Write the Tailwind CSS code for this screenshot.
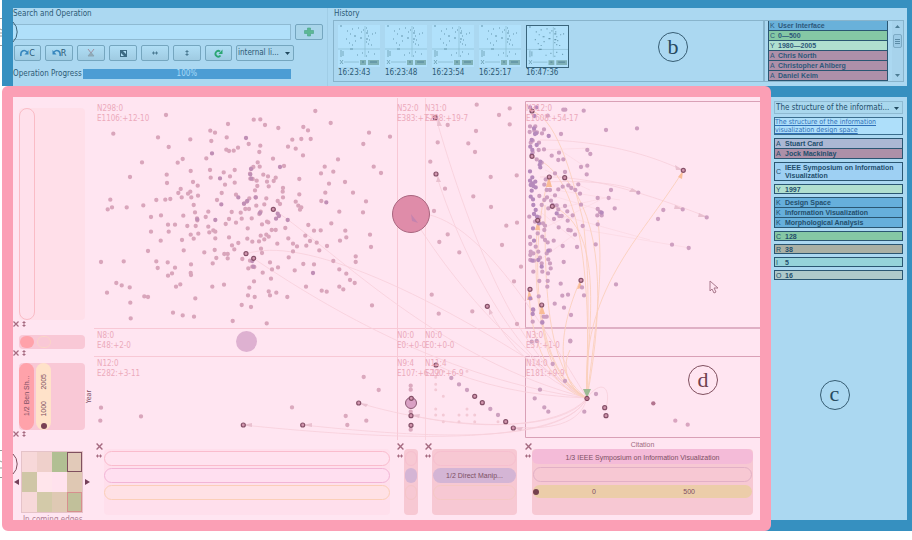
<!DOCTYPE html>
<html lang="en">
<head>
<meta charset="utf-8">
<meta name="viewport" content="width=device-width, initial-scale=1">
<title>Citation network explorer</title>
<script src="https://cdn.jsdelivr.net/npm/@tailwindcss/browser@4"></script>
</head>
<body class="relative overflow-hidden bg-white font-['DejaVu_Sans_Condensed','DejaVu_Sans',sans-serif] text-[8px] leading-[10px] text-[#2c5a75]">

<svg class="hidden">
  <symbol id="thumb" viewBox="0 0 42 42">
    <rect width="42" height="42" fill="#b1e1fb"/>
    <path d="M0 24H42M27 1V32" stroke="#8bbdd3" stroke-width=".7" fill="none"/>
    <path d="M2 1h2M9 6h1M14 4h1M20 3h1M12 9h1M8 14h1M16 11h2M11 18h1M17 16h1M14 20h1M23 7h1M22 13h2M25 5h1M28 3h1M29 6h1M28 8h2M30 11h1M28 14h2M31 15h1M28 17h1M30 19h1M34 9h1M37 8h1M33 20h1M12 24h3M24 28h1M30 27h1M19 30h1M36 29h1M28 31h1" stroke="#6698af" stroke-width="1.2"/>
    <path d="M3 25v7M5 26v5M2 35l3 4M5 35l-3 4" stroke="#77a9bd" stroke-width="1" fill="none"/>
    <path d="M6 37H21" stroke="#8fc0d6"/>
    <path d="M22 35h6v5h-6zM30 35h11v5H30z" fill="#80b1b7"/>
    <path d="M24 37h2M32 37h7" stroke="#4f8299"/>
  </symbol>
  <symbol id="cross" viewBox="0 0 6 6"><path d="M.5.5l5 5M5.500 .5l-5 5" stroke="#a56a80" stroke-width="1.2"/></symbol>
  <symbol id="updown" viewBox="0 0 6 6"><path d="M3 0l2 2H3.500V4H5L3 6 1 4h1.500V2H1z" fill="#a56a80"/></symbol>
  <symbol id="leftright" viewBox="0 0 6 4"><path d="M0 2L2 0V1.500H4V0L6 2 4 4V2.500H2V4z" fill="#a56a80"/></symbol>
</svg>

<header class="ml-[2px] flex h-[86px] border-t-8 border-r-[5px] border-l-[11px] border-[#3690c0] bg-[#abd8f1]">
  <section class="flex w-[315px] shrink-0 flex-col border-r border-[#a0cde6]">
    <h2 class="h-4 pt-px"><label for="q">Search and Operation</label></h2>
    <div class="flex h-4 gap-1 pr-1">
      <input id="q" type="text" class="h-4 min-w-0 flex-1 border border-l-0 border-[#8ebad2] bg-[#b0e0fa] pl-1">
      <button aria-label="Add" class="flex h-4 w-7 items-center justify-center rounded-xs border border-[#75a6bf] bg-[#a9d5ea]">
        <svg class="size-[10px]" viewBox="0 0 10 10"><path d="M3.500 1h3v2.500H9.500v3h-3V9h-3V6.500H.5v-3h3z" fill="#5cb894" stroke="#48a585" stroke-width=".6"/></svg>
      </button>
    </div>
    <div class="mt-[5px] flex h-4 gap-1 pl-px text-[9px]">
      <button class="flex w-[27px] items-center justify-center rounded-xs border border-[#75a6bf] bg-linear-to-b from-[#b0def5] to-[#9fcbe2]"><svg class="h-2 w-[9px]" viewBox="0 0 9 8"><path d="M1 7C0 2 4 0 7 3" fill="none" stroke="#3686bd" stroke-width="1.600"/><path d="M8.500 1v4.500H4.500z" fill="#3686bd"/></svg>C</button>
      <button class="flex w-[28px] items-center justify-center rounded-xs border border-[#75a6bf] bg-linear-to-b from-[#b0def5] to-[#9fcbe2]"><svg class="h-2 w-[9px]" viewBox="0 0 9 8"><path d="M8 7C9 2 5 0 2 3" fill="none" stroke="#3686bd" stroke-width="1.600"/><path d="M.5 1v4.500H4.500z" fill="#3686bd"/></svg>R</button>
      <button aria-label="Cut" class="flex w-[28px] items-center justify-center rounded-xs border border-[#75a6bf] bg-linear-to-b from-[#b0def5] to-[#9fcbe2]"><svg class="size-2" viewBox="0 0 8 8"><path d="M1 0l3 4 3-4" fill="none" stroke="#a08fa0"/><path d="M4 3.500L1 7h6z" fill="#92a9b5" stroke="#8aa6b5"/></svg></button>
      <button aria-label="Fit" class="flex w-[28px] items-center justify-center rounded-xs border border-[#75a6bf] bg-linear-to-b from-[#b0def5] to-[#9fcbe2]"><svg class="size-[7px]" viewBox="0 0 7 7"><path d="M0 0h7v7H0z" fill="#3c6a83"/><path d="M1 6h3L1 3zM3 1h3v3z" fill="#b0def5"/></svg></button>
      <button aria-label="Stretch horizontally" class="flex w-[28px] items-center justify-center rounded-xs border border-[#75a6bf] bg-linear-to-b from-[#b0def5] to-[#9fcbe2]"><svg class="h-1 w-[6px]" viewBox="0 0 6 4"><path d="M0 2L2 0V1.500H4V0L6 2 4 4V2.500H2V4z" fill="#4b7b93"/></svg></button>
      <button aria-label="Stretch vertically" class="flex w-[28px] items-center justify-center rounded-xs border border-[#75a6bf] bg-linear-to-b from-[#b0def5] to-[#9fcbe2]"><svg class="size-[6px]" viewBox="0 0 6 6"><path d="M3 0l2 2H3.500V4H5L3 6 1 4h1.500V2H1z" fill="#4b7b93"/></svg></button>
      <button aria-label="Refresh" class="flex w-[27px] items-center justify-center rounded-xs border border-[#75a6bf] bg-linear-to-b from-[#b0def5] to-[#9fcbe2]"><svg class="size-[9px]" viewBox="0 0 9 9"><path d="M6.500 6.500A2.800 2.800 0 1 1 6 2.500" fill="none" stroke="#2ba673" stroke-width="1.800"/><path d="M8.500.5V5H4.500z" fill="#2ba673"/></svg></button>
      <div class="relative w-[58px]">
        <select aria-label="Edge filter" class="h-4 w-full appearance-none rounded-xs border border-[#75a6bf] bg-[#a9d5ec] pl-px text-[8px]"><option>internal li...</option></select>
        <svg class="pointer-events-none absolute top-[7px] right-1 h-[3px] w-[5px]" viewBox="0 0 5 3"><path d="M0 0h5L2.500 3z" fill="#21495f"/></svg>
      </div>
    </div>
    <div class="mt-2 flex items-center gap-px">
      <label for="prog">Operation Progress</label>
      <div id="prog" role="progressbar" aria-valuenow="100" class="mr-9 flex-1 bg-[#4c9dd4] text-center text-[#a8dbf8]">100%</div>
    </div>
  </section>
  <section class="ml-[5px] flex min-w-0 flex-1 flex-col pr-[3px]">
    <h2 class="h-3 pt-px pl-px">History</h2>
    <div class="flex h-[62px]">
      <div class="flex min-w-0 flex-1 gap-[5px] border border-[#88b4cc] pt-1 pl-1">
        <figure class="w-[42px]"><svg class="size-[42px]"><use href="#thumb"/></svg><figcaption class="mt-px">16:23:43</figcaption></figure>
        <figure class="w-[42px]"><svg class="size-[42px]"><use href="#thumb"/></svg><figcaption class="mt-px">16:23:48</figcaption></figure>
        <figure class="w-[42px]"><svg class="size-[42px]"><use href="#thumb"/></svg><figcaption class="mt-px">16:23:54</figcaption></figure>
        <figure class="w-[42px]"><svg class="size-[42px]"><use href="#thumb"/></svg><figcaption class="mt-px">16:25:17</figcaption></figure>
        <figure class="w-[43px]"><svg class="size-[43px] border border-[#3a657c]"><use href="#thumb"/></svg><figcaption>16:47:36</figcaption></figure>
        <div class="flex flex-1 justify-center pl-[9px]"><span class="mt-[7px] flex size-[30px] items-center justify-center rounded-full border border-[#375d73] font-['Liberation_Serif',serif] text-[22px] leading-none text-[#274a60]">b</span></div>
      </div>
      <div class="flex w-[140px] border border-[#88b4cc] pl-[3px] font-['Liberation_Sans',sans-serif] text-[7px] leading-[9px]">
        <ul class="h-[60px] w-[120px] overflow-hidden border-x border-[#2a5672] font-bold text-[#2d587a]">
          <li class="flex h-[10px] gap-[3px] border-b border-[#2a5672] bg-[#69b1da] pl-px"><span class="w-[5px] font-normal">K</span>User Interface</li>
          <li class="flex h-[10px] gap-[3px] border-b border-[#2a5672] bg-[#85c8a5] pl-px"><span class="w-[5px] font-normal">C</span>0—500</li>
          <li class="flex h-[10px] gap-[3px] border-b border-[#2a5672] bg-[#b0dfcf] pl-px"><span class="w-[5px] font-normal">Y</span>1980—2005</li>
          <li class="flex h-[10px] gap-[3px] border-b border-[#2a5672] bg-[#ae90a9] pl-px"><span class="w-[5px] font-normal">A</span>Chris North</li>
          <li class="flex h-[10px] gap-[3px] border-b border-[#2a5672] bg-[#ae90a9] pl-px"><span class="w-[5px] font-normal">A</span>Christopher Ahlberg</li>
          <li class="flex h-[10px] gap-[3px] border-b border-[#2a5672] bg-[#ae90a9] pl-px"><span class="w-[5px] font-normal">A</span>Daniel Keim</li>
        </ul>
        <div class="ml-1 flex flex-1 flex-col items-center bg-[#a7d3ec] py-1">
          <svg class="h-[3px] w-[5px]" viewBox="0 0 5 3"><path d="M0 3h5L2.500 0z" fill="#4d7c94"/></svg>
          <div class="mt-[6px] flex h-[14px] w-[9px] flex-col items-center justify-center gap-px rounded-xs border border-[#7dabc5] bg-[#9dcbe6]"><i class="h-px w-[5px] bg-[#5b8ba6]"></i><i class="h-px w-[5px] bg-[#5b8ba6]"></i><i class="h-px w-[5px] bg-[#5b8ba6]"></i></div>
          <svg class="mt-auto h-[3px] w-[5px]" viewBox="0 0 5 3"><path d="M0 0h5L2.500 3z" fill="#4d7c94"/></svg>
        </div>
      </div>
    </div>
  </section>
</header>

<div class="ml-[2px] flex h-[445px]">
  <main class="relative z-10 grid min-w-0 flex-1 grid-cols-[81px_minmax(0,1fr)] grid-rows-[343px_80px] overflow-hidden rounded-md border-[11px] border-[#fb9fb5] bg-[#ffe5f1] text-[#7d4f63]">

    <div class="flex flex-col pt-[11px]">
      <div class="ml-[6px] flex h-[212px] w-[66px] rounded-sm bg-[#ffdfe9]"><div class="w-[16px] rounded-full border border-[#fabcc6] bg-[#ffe0eb]"></div></div>
      <div class="flex h-[15px] gap-[2px]"><svg class="mt-px size-[6px]"><use href="#cross"/></svg><svg class="mt-px size-[6px]"><use href="#updown"/></svg></div>
      <div class="ml-[6px] flex h-[14px] w-[66px] items-center gap-[3px] rounded-sm bg-[#f9c8d6]"><i class="ml-px h-3 w-[14px] rounded-full bg-[#ffa2aa]"></i><i class="h-3 w-[14px] rounded-full border border-[#fbd5c8]"></i></div>
      <div class="flex h-[14px] gap-[2px]"><svg class="mt-px size-[6px]"><use href="#cross"/></svg><svg class="mt-px size-[6px]"><use href="#updown"/></svg></div>
      <div class="flex items-center">
        <div class="ml-[6px] flex h-[67px] w-[66px] gap-[2px] rounded-sm bg-[#f9c8d6] font-['Liberation_Sans',sans-serif] text-[7px] leading-[15px]">
          <div class="h-full w-[15px] rounded-full bg-[#ffa2aa]"><span class="block h-full rotate-180 pt-[14px] [writing-mode:vertical-rl]">1/2 Ben Sh...</span></div>
          <div class="flex h-full w-[15px] flex-col items-center rounded-full bg-[#ffe2c9] pb-px"><span class="mt-[11px] rotate-180 [writing-mode:vertical-rl]">2005</span><span class="mt-[11px] rotate-180 [writing-mode:vertical-rl]">1000</span><i class="mt-auto size-[6px] rounded-full bg-[#7a4055]"></i></div>
        </div>
        <span class="rotate-180 text-[7px] leading-[9px] [writing-mode:vertical-rl]">Year</span>
      </div>
      <div class="flex gap-[2px]"><svg class="mt-px size-[6px]"><use href="#cross"/></svg><svg class="mt-px size-[6px]"><use href="#updown"/></svg></div>
    </div>

    <svg class="h-full w-full" viewBox="94 97 666 343" font-size="8" fill="none">
      <g stroke="#f8c8d5">
        <path d="M94 328.500H525M94 356.500H525M397.500 98V440"/><path d="M425.500 98V440" stroke="#fbd3dd"/>
        <path d="M760 101.500H525.500V328M760 356.500H525.500V437.500H760" stroke="#d9a0b6"/><path d="M525 328H760" stroke="#dfb0c5" stroke-width="2"/>
      </g>
      <g stroke="#f7cfda" stroke-width=".8">
        <path d="M273 209C340 255 440 360 587 398M246 254C300 235 430 290 587 398M253 258C330 310 450 380 587 398M411 214C470 310 540 370 587 398M417 213C480 215 545 330 587 398M436 118C480 270 530 370 587 398M436 174C470 280 530 375 587 398M487 306Q520 370 587 398M436 365Q500 395 587 398M510 427C550 430 580 425 587 398"/>
        <path d="M243 425C350 436 560 453 587 398M303 425C400 435 560 450 587 398M359 403C450 430 560 435 587 398M411 415C470 430 560 430 587 398M587 398C600 380 612 385 606 408M540 177C590 175 650 195 705 216M545 182C590 180 625 184 638 192M540 140C600 140 650 155 680 169"/>
      </g>
      <path d="M545 170L590 190M550 195L600 210M540 230L600 200M555 190L620 200M550 210L605 198M540 150L590 148M560 215L650 240M585 230L690 248M560 150L590 170M540 260L580 230M538 210L575 240" stroke="#fbd9e3" stroke-width=".8"/>
      <g stroke="#fad0bc" stroke-width=".9">
        <path d="M532 111C560 120 575 190 583 220C592 290 586 350 587 398M532 157C575 170 592 250 587 398M549 177C530 240 530 370 587 398M565 178C602 220 605 300 587 398M552 206C610 230 585 340 587 398M538 220C530 300 545 380 587 398M529 290C530 340 550 390 587 398M542 305C540 350 560 390 587 398M580 281C550 350 565 390 587 398M683 171C640 240 580 290 587 398M545 205C545 280 545 370 587 398M598 220C604 280 595 330 587 398M570 350C560 370 570 390 587 398"/>
      </g>
      <g fill="#f9bd97"><path d="M549 177l-3 10h6zM538 220l-3 10h5zM529 290l-2 10h6zM542 305l-3 9h6zM580 281l-3 8 5-1zM683 171l-5 6 4 2z"/></g>
      <g fill="#eac1d0"><path d="M638 192l-6-4-3 4zM683 170l-8-5 1 5zM683 209l-8-4-1 4zM707 217l-8-4-1 4zM243 425l9-2v4zM303 425l9-2v4zM359 403l9 1-2 3zM411 415l9-1-1 4zM514 428l9-1-2 4zM438 176l-2 6h5zM438 118l-1 8h5zM489 308l0 7 4-2z"/></g>
      <circle cx="411" cy="214" r="18.500" fill="#df8ca9" stroke="#a9657f"/><path d="M411 214l1 7 6 2z" fill="#c583ae"/>
      <circle cx="246.500" cy="341.500" r="10.500" fill="#deb1d1"/>
      <circle cx="411" cy="403" r="5.500" fill="#d9a0c4" stroke="#8b5873"/>
      <g id="dots" stroke-linecap="round"></g>
      <path d="M583 389h8l-4 9z" fill="#9dbb94"/><circle cx="587" cy="398.500" r="2.200" fill="#b9748c" stroke="#7c4259"/>
      <g fill="#ecaabb" class="font-['DejaVu_Sans_Condensed','DejaVu_Sans',sans-serif]">
        <text x="97" y="111">N298:0</text><text x="97" y="121">E1106:+12-10</text>
        <text x="397" y="111">N52:0</text><text x="397" y="121">E383:+7-8</text>
        <text x="425" y="111">N31:0</text><text x="425" y="121">E298:+19-7</text>
        <text x="526" y="111">N312:0</text><text x="526" y="121">E1608:+54-17</text>
        <text x="97" y="338">N8:0</text><text x="97" y="348">E48:+2-0</text>
        <text x="397" y="338">N0:0</text><text x="397" y="348">E0:+0-0</text>
        <text x="425" y="338">N0:0</text><text x="425" y="348">E0:+0-0</text>
        <text x="526" y="338">N3:0</text><text x="526" y="348">E37:+1-0</text>
        <text x="97" y="366">N12:0</text><text x="97" y="376">E282:+3-11</text>
        <text x="397" y="366">N9:4</text><text x="397" y="376">E107:+6-12</text>
        <text x="425" y="366">N11:4</text><text x="425" y="376">E290:+6-9</text>
        <text x="526" y="366">N14:0</text><text x="526" y="376">E181:+9-9</text>
      </g>
      <circle cx="703" cy="380" r="14.500" stroke="#80505f"/><text x="703" y="387" text-anchor="middle" font-size="22" fill="#70404f" class="font-['Liberation_Serif',serif]">d</text>
      <path d="M710 281v10l2-2 2 4 2-1-2-4h4z" fill="#ffe5f1" stroke="#a9788c"/>
    </svg>

    <div class="flex flex-col pt-[11px]">
      <div class="flex items-center gap-[2px] pl-px">
        <button aria-label="Previous"><svg class="block h-[6px] w-[5px]" viewBox="0 0 5 6"><path d="M5 0v6L0 3z" fill="#75405a"/></svg></button>
        <div class="grid h-[62px] w-[62px] grid-cols-4 grid-rows-3 border border-[#e5c3c9]">
          <i class="bg-[#f7d8d9]"></i><i class="bg-[#efd0cb]"></i><i class="bg-[#b1bf93]"></i><i class="border border-[#80505f] bg-[#e2cab9]"></i>
          <i class="bg-[#cfc6a6]"></i><i class="bg-[#ffe5eb]"></i><i class="bg-[#ffe2ed]"></i><i class="bg-[#dfc8b3]"></i>
          <i class="bg-[#f7d8d9]"></i><i class="bg-[#d3caa9]"></i><i class="bg-[#dfc9b4]"></i><i class="border border-[#d78f8e] bg-[#c1c09a]"></i>
        </div>
        <button aria-label="Next"><svg class="block h-[6px] w-[5px]" viewBox="0 0 5 6"><path d="M0 0v6L5 3z" fill="#75405a"/></svg></button>
      </div>
      <div class="mt-[2px] h-[5px] overflow-hidden pl-[10px] text-[#b07d92]">In coming edges</div>
    </div>

    <div class="grid grid-cols-[303fr_28fr_100fr_235fr] pt-[3px] font-['Liberation_Sans',sans-serif] text-[7px]">
      <div class="flex gap-px pr-[7px] pl-[2px]">
        <div class="flex w-[7px] flex-col gap-1"><svg class="size-[7px]"><use href="#cross"/></svg><svg class="h-1 w-[6px]"><use href="#leftright"/></svg></div>
        <div class="mt-[6px] flex h-[66px] flex-1 flex-col gap-[2px] rounded-sm bg-[#ffdfec] pt-[2px]"><i class="h-[15px] rounded-full border border-[#fabccd] bg-[#ffe2ef]"></i><i class="h-[15px] rounded-full border border-[#f2b5d6] bg-[#ffdff0]"></i><i class="h-[15px] rounded-full border border-[#fbcfb8] bg-[#ffe1e5]"></i></div>
      </div>
      <div class="flex">
        <div class="flex w-[7px] flex-col gap-1"><svg class="size-[7px]"><use href="#cross"/></svg><svg class="h-1 w-[6px]"><use href="#leftright"/></svg></div>
        <div class="mt-[6px] flex h-[66px] w-[14px] flex-col items-center gap-[2px] rounded-sm bg-[#f7c8d3] pt-[2px]"><i class="h-[15px] w-3 rounded-full border border-[#f6bfcf]"></i><i class="h-[15px] w-3 rounded-full bg-[#d4b5d5]"></i><i class="h-[15px] w-3 rounded-full border border-[#f5c5c8]"></i></div>
      </div>
      <div class="flex pr-2">
        <div class="flex w-[7px] flex-col gap-1"><svg class="size-[7px]"><use href="#cross"/></svg><svg class="h-1 w-[6px]"><use href="#leftright"/></svg></div>
        <div class="mt-[6px] flex h-[66px] flex-1 flex-col gap-[2px] rounded-sm bg-[#f7c8d3] px-px pt-[2px]"><i class="h-[15px] rounded-full border border-[#f6bfcf]"></i><div class="h-[15px] rounded-full bg-[#d4b5d5] text-center leading-[15px]">1/2 Direct Manip...</div><i class="h-[15px] rounded-full border border-[#f5c8c4]"></i></div>
      </div>
      <div class="flex pr-[7px]">
        <div class="flex w-[7px] flex-col gap-1"><svg class="size-[7px]"><use href="#cross"/></svg><svg class="h-1 w-[6px]"><use href="#leftright"/></svg></div>
        <div class="relative mt-[6px] flex h-[66px] flex-1 flex-col gap-[2px] rounded-sm bg-[#f7c8d3] px-px">
          <span class="absolute inset-x-0 -top-[9px] text-center leading-[10px] text-[#a06a7e]">Citation</span>
          <div class="-mx-px h-[15px] rounded-md bg-[#f4bbd8] text-center leading-[17px]">1/3 IEEE Symposium on Information Visualization</div>
          <i class="mt-px h-[15px] rounded-full border border-[#e2b0c6]"></i>
          <div class="mt-px flex h-[13px] items-center rounded-full bg-[#eccda9]"><i class="size-[6px] rounded-full bg-[#75404f]"></i><span class="ml-[53px] flex-1">0</span><span class="mr-[57px]">500</span></div>
        </div>
      </div>
    </div>
  </main>

  <aside class="-ml-[6px] flex h-[445px] w-[147px] shrink-0 flex-col gap-[3px] border-t-[11px] border-r-[5px] border-b-[11px] border-[#3690c0] bg-[#abd8f1] pt-1 pr-1 pl-[9px] font-['Liberation_Sans',sans-serif] text-[7px] leading-[9px] text-[#234e6c]">
    <div class="relative">
      <select aria-label="Selected paper" class="block h-[13px] w-full appearance-none border border-[#8ebad2] bg-[#a9d7ed] pl-px font-['DejaVu_Sans_Condensed','DejaVu_Sans',sans-serif] text-[8px]"><option>The structure of the informati...</option></select>
      <svg class="pointer-events-none absolute top-[6px] right-1 h-[3px] w-[5px]" viewBox="0 0 5 3"><path d="M0 0h5L2.500 3z" fill="#21495f"/></svg>
    </div>
    <div class="h-[18px] border border-[#3a6d8d] bg-[#aedffa] font-['DejaVu_Sans_Condensed','DejaVu_Sans',sans-serif] leading-[8px]"><a href="#" class="text-[#2f70b8] underline">The structure of the information visualization design space</a></div>
    <div class="border border-[#2a5672]">
      <div class="flex h-[10px] gap-1 border-b border-[#2a5672] bg-[#abb8d4] pl-px"><span class="w-[5px]">A</span><b>Stuart Card</b></div>
      <div class="flex h-[9px] gap-1 bg-[#ad90a8] pl-px"><span class="w-[5px]">A</span><b>Jock Mackinlay</b></div>
    </div>
    <div class="flex h-[19px] items-center gap-1 border border-[#2a5672] bg-[#9ed0f3] pl-px leading-[8px]"><span class="w-[5px]">C</span><b>IEEE Symposium on Information Visualization</b></div>
    <div class="flex h-[10px] gap-1 border border-[#2a5672] bg-[#b0dfcf] pl-px"><span class="w-[5px]">Y</span><b>1997</b></div>
    <div class="border border-[#2a5672]">
      <div class="flex h-[10px] gap-1 border-b border-[#2a5672] bg-[#66afdb] pl-px"><span class="w-[5px]">K</span><b>Design Space</b></div>
      <div class="flex h-[10px] gap-1 border-b border-[#2a5672] bg-[#66afdb] pl-px"><span class="w-[5px]">K</span><b>Information Visualization</b></div>
      <div class="flex h-[9px] gap-1 bg-[#66afdb] pl-px"><span class="w-[5px]">K</span><b>Morphological Analysis</b></div>
    </div>
    <div class="flex h-[10px] gap-1 border border-[#2a5672] bg-[#85c8a5] pl-px"><span class="w-[5px]">C</span><b>128</b></div>
    <div class="flex h-[10px] gap-1 border border-[#2a5672] bg-[#a9b0a5] pl-px"><span class="w-[5px]">R</span><b>38</b></div>
    <div class="flex h-[10px] gap-1 border border-[#2a5672] bg-[#95d3da] pl-px"><span class="w-[5px]">I</span><b>5</b></div>
    <div class="flex h-[10px] gap-1 border border-[#2a5672] bg-[#aec9ca] pl-px"><span class="w-[5px]">O</span><b>16</b></div>
    <div class="flex flex-1 justify-center pr-2"><span class="mt-[97px] flex size-[30px] items-center justify-center rounded-full border border-[#375d73] pb-[3px] font-['Liberation_Serif',serif] text-[22px] leading-none text-[#274a60]">c</span></div>
  </aside>
</div>

<!-- callout rings that run off the left edge of the window -->
<svg class="pointer-events-none absolute top-[17px] left-0 z-20 h-[30px] w-[18px]" viewBox="0 0 18 30" fill="none"><path d="M13 5A14 14 0 0 1 13 25" stroke="#3d6479"/><path d="M0 1.500h2M0 28.500h2M0 12l2 1M0 16h2M0 19h2" stroke="#999"/></svg>
<svg class="pointer-events-none absolute top-[449px] left-0 z-20 h-[30px] w-[18px]" viewBox="0 0 18 30" fill="none"><path d="M13 5A14 14 0 0 1 13 25" stroke="#80505f"/><path d="M0 1.500h2M0 28.500h2M0 12l2 1M0 19h2" stroke="#999"/></svg>

<script>
// Node positions per tile, in thirds of a pixel from the tile's origin.
const tiles = [
  {x:0,y:90,c:'#d9a5bb',p:'498,75 340,131 474,142 506,171 548,207 533,218 426,217 500,254 501,279 390,261 542,297 535,309 564,311 545,322 331,329 336,352 323,358 380,352 430,346 469,330 496,329 511,327 453,381 483,376 550,377 504,404 525,404 562,408 506,425 453,425 482,452 546,450 551,481 444,483 303,516 371,514 469,514 503,517 473,534 525,533 516,550 504,557 541,583 528,590 349,579 365,586 389,592 321,608 433,619 444,621 391,638 392,685 519,668 548,676 303,953 301,992 423,979'},
  {x:190,y:95,c:'#d9a5bb',p:'376,48 191,74 211,73 225,90 265,99 114,87 61,107 75,113 64,138 110,127 176,147 144,158 131,167 109,164 117,168 49,190 211,152 208,171 307,134 334,132 362,132 354,106 340,96 422,84 317,161 294,155 339,181 249,191 203,202 209,215 282,213 60,225 101,232 120,244 134,225 62,248 105,269 134,263 185,220 190,216 180,236 181,251 188,252 220,239 234,244 257,248 251,258 231,260 200,257 202,273 236,274 195,286 279,279 278,290 328,252 328,298 404,215 393,235 430,230 444,193 417,266 465,261 406,293 394,318 489,293 528,319 519,352 551,215 573,234 520,147 537,113 600,125 2,228 9,261 23,272 4,307 24,302 11,330 95,294 81,315 138,299 178,310 170,320 162,326 197,307 229,310 279,307 263,318 270,327 223,328 199,332 166,342 177,342 317,320 325,332 330,344 334,337 212,350 208,357 448,350 424,385 355,390 15,352 55,350 47,366 21,370 22,376 107,387 117,372 125,351 152,353 138,383 155,371 185,370 231,380 216,388 235,382 173,400 172,431 245,405 257,405 286,399 17,393 55,395 70,406 76,410 58,412 25,416 11,431 2,419 76,430 117,427 145,444 126,451 133,463 187,440 207,439 223,433 229,419 236,425 212,422 262,446 295,430 309,446 321,454 309,469 296,487 346,422 372,407 392,406 360,438 380,443 349,452 388,466 411,453 466,407 469,427 450,437 540,419 543,456 497,484 497,501 430,498 448,523 469,536 480,555 494,564 448,575 460,583 43,472 74,465 79,489 68,505 103,477 113,477 113,490 157,492 213,461 180,497 216,474 240,502 246,523 264,517 218,533 243,551 175,520 187,515 193,516 314,526 340,507 372,508 348,575 395,587 410,590 292,606 259,593 236,589 240,601 192,559 178,578 174,601 194,606 67,575 102,569 3,508 3,540 16,610 12,665 155,630 183,636 128,678 230,685 546,631 1,133 1,290 2,534'},
  {x:190,y:95,c:'#c08eb5',p:'168,129 66,175 270,216 90,250 145,307 94,328 76,375 293,375 409,322 369,534 183,222 181,238 184,251 197,307 172,318 162,326 210,354 263,356 267,363 258,371 187,498 190,515 22,373'},
  {x:380,y:90,c:'#dba9be',p:'290,44 389,55 357,75 389,103 203,105 288,123 265,160 285,186 173,157 151,215 195,296 332,261 410,256 280,319 333,351 379,407 411,398 366,465 203,433 178,456 238,487 162,363 423,530 402,574 155,614 176,671 277,664 411,702'},
  {x:515,y:90,c:'#ce9fc0',p:'145,59 151,59 206,62 98,77 138,132 273,120 366,115 45,109 61,109 44,126 58,122 66,127 87,118 81,130 72,158 53,152 47,158 53,187 71,180 87,178 65,208 80,218 110,197 132,188 130,210 145,208 120,250 150,246 217,180 226,192 217,227 198,231 215,253 130,298 143,290 160,286 169,294 181,300 190,283 195,311 120,316 108,332 125,346 130,358 150,348 157,364 173,376 158,392 131,412 117,387 133,378 140,378 198,344 203,408 180,434 160,420 167,421 143,468 186,471 248,324 281,324 288,300 299,355 370,308 503,358 575,382 445,360 429,387 471,464 521,474 247,376 255,366 260,376 248,357 248,403 242,463 116,452 98,457 105,481 82,440 68,430 90,407 88,420 45,441 46,462 47,485 46,495 46,510 70,485 75,503 95,490 100,508 105,520 107,535 80,520 82,545 99,550 55,545 146,516 73,573 98,573 97,590 137,581 142,617 159,614 201,592 207,616 119,641 147,653 168,675 55,660 53,695 71,619 86,680 95,680 82,696 303,583 95,300 88,284 92,268 73,318 88,330 80,345 100,355 43,380 60,395 73,382 84,400 90,450 62,470 55,490 57,512 113,345 105,300 96,322 166,752 113,822'},
  {x:515,y:90,c:'#b68abc',p:'101,138 60,132 46,170 52,180 65,165 50,195 76,215 76,232 74,225 45,244 52,262 45,272 53,280 61,275 55,288 62,292 50,302 47,320 54,328 55,345 62,360 57,372 66,380 63,130 57,115 72,400 54,415 52,512 100,482 80,530 54,658 53,672 46,625 70,510 57,452 125,370 260,368 47,285 50,150 82,698 58,78 45,52 64,52'},
  {x:200,y:325,c:'#dba9be',p:'491,156 536,195 276,247 437,273 442,300 499,287 632,182 632,194 632,260 632,314'},
  {x:390,y:325,c:'#f3c9d5',w:9,p:'137,157 137,178 137,194 160,139 160,214 137,252 137,270 160,270 160,290 207,270 207,290 231,252 231,270 254,270 254,290 324,290 231,139'},
  {x:390,y:325,c:'#cda0bf',p:'184,159 207,178 231,195 301,252 324,270 450,194 434,220 463,247 475,260 525,168 541,49 425,50 440,48 583,260 618,207'},
  {x:520,y:325,c:'#d9a5c0',p:'466,287 503,299'},
  {x:520,y:325,c:'#b3748f',p:'400,235'}
];
const rings = [
  [190,95,'250,343 168,476 191,490'],[380,90,'166,83 168,252 322,649'],
  [515,90,'51,63 51,199 103,261 149,263 112,349 68,391 45,598 80,645 198,571 505,241'],
  [200,325,'130,300 308,300 476,234 634,220 633,272 633,301'],
  [390,325,'138,120 254,214 277,233 347,290 370,309'],[520,325,'254,248 258,272']
];
const g = document.getElementById('dots');
const add = (n, a) => { const e = document.createElementNS('http://www.w3.org/2000/svg', n); for (const k in a) e.setAttribute(k, a[k]); g.append(e); };
const at = (s, x, y) => s.split(' ').map(q => q.split(',').map((v, i) => +(v / 3 + (i ? y : x)).toFixed(1)));
for (const t of tiles) add('path', {d: at(t.p, t.x, t.y).map(q => `M${q}h.01`).join(''), stroke: t.c, 'stroke-width': (t.w || 13) / 3});
for (const [x, y, s] of rings) for (const [cx, cy] of at(s, x, y)) add('circle', {cx, cy, r: 2, fill: '#d295ae', stroke: '#855068', 'stroke-width': 1.2});
</script>
</body>
</html>
